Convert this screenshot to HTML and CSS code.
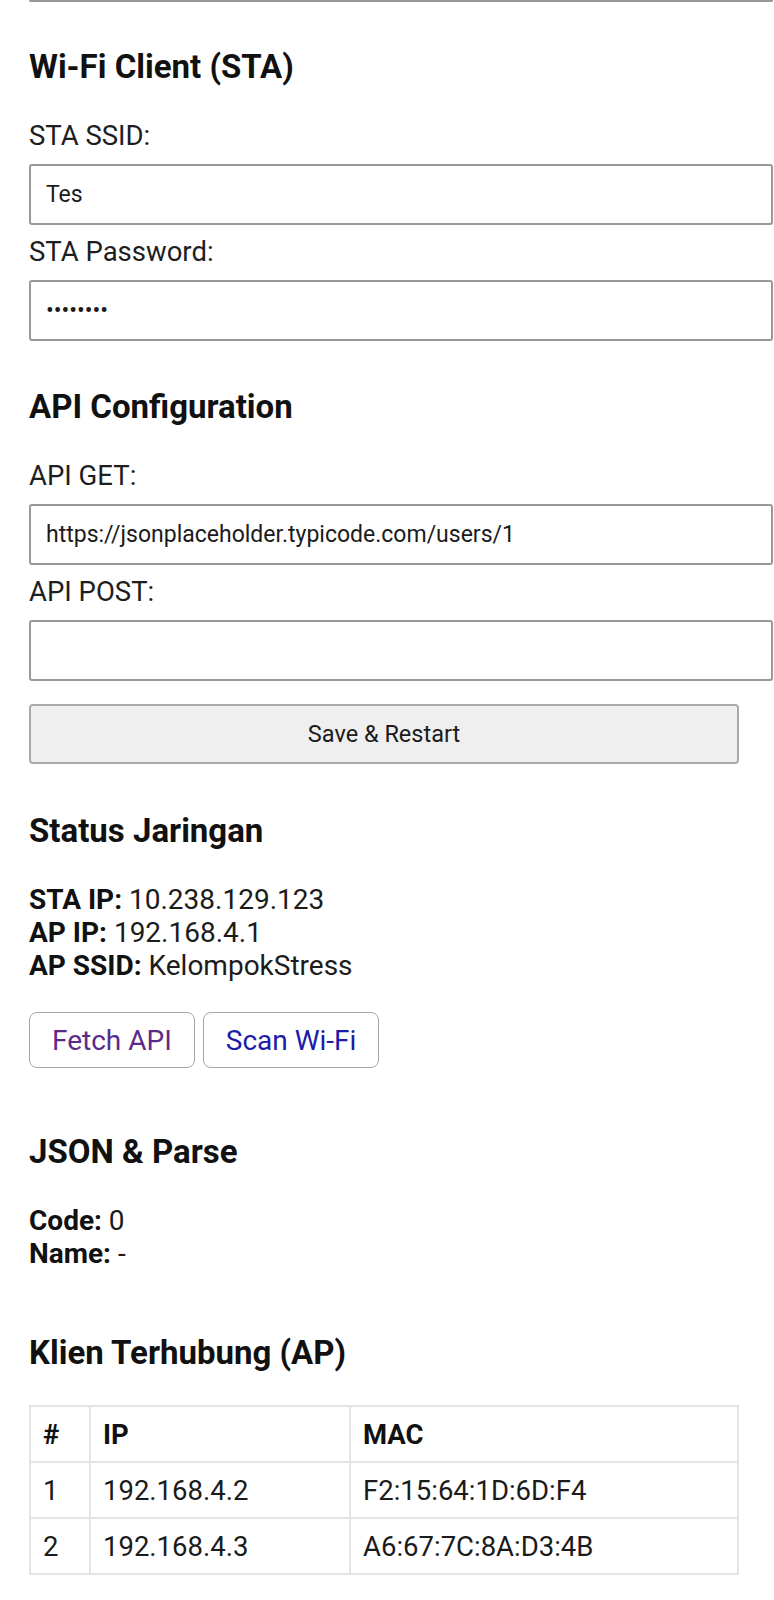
FILE: index.html
```html
<!DOCTYPE html>
<html lang="id">
<head>
<meta charset="utf-8">
<title>Konfigurasi</title>
<link rel="stylesheet" href="styles.css">
</head>
<body>
<div class="page">
  <div class="prev-field"></div>

  <section class="sec sec-sta">
    <h2 class="title">Wi-Fi Client (STA)</h2>
    <label class="lbl" for="ssid">STA SSID:</label>
    <input class="field" id="ssid" type="text" value="Tes">
    <label class="lbl" for="pass">STA Password:</label>
    <input class="field" id="pass" type="password" value="12345678">
  </section>

  <section class="sec sec-api">
    <h2 class="title">API Configuration</h2>
    <label class="lbl" for="get">API GET:</label>
    <input class="field" id="get" type="text" value="https://jsonplaceholder.typicode.com/users/1">
    <label class="lbl" for="post">API POST:</label>
    <input class="field" id="post" type="text" value="">
    <button class="save" type="button">Save &amp; Restart</button>
  </section>

  <section class="sec sec-status">
    <h2 class="title">Status Jaringan</h2>
    <p class="info"><b>STA IP:</b> 10.238.129.123<br><b>AP IP:</b> 192.168.4.1<br><b>AP SSID:</b> KelompokStress</p>
    <div class="actions">
      <a class="btn btn-visited" href="#fetch">Fetch API</a>
      <a class="btn btn-link" href="#scan">Scan Wi-Fi</a>
    </div>
  </section>

  <section class="sec sec-json">
    <h2 class="title">JSON &amp; Parse</h2>
    <p class="info"><b>Code:</b> 0<br><b>Name:</b> -</p>
  </section>

  <section class="sec sec-clients">
    <h2 class="title">Klien Terhubung (AP)</h2>
    <table class="clients">
      <thead>
        <tr><th class="c-no">#</th><th class="c-ip">IP</th><th class="c-mac">MAC</th></tr>
      </thead>
      <tbody>
        <tr><td>1</td><td>192.168.4.2</td><td>F2:15:64:1D:6D:F4</td></tr>
        <tr><td>2</td><td>192.168.4.3</td><td>A6:67:7C:8A:D3:4B</td></tr>
      </tbody>
    </table>
  </section>
</div>
</body>
</html>
```
FILE: styles.css
```css
html, body {
  margin: 0;
  padding: 0;
  background: #ffffff;
}

body {
  font-family: Roboto, "Liberation Sans", sans-serif;
  color: #1b1b1b;
}

.page {
  width: 710px;
  padding-left: 29px;
}

.prev-field {
  width: 740px;
  height: 0;
  border: 2px solid #999;
  border-top: none;
  border-radius: 0 0 3px 3px;
}

.sec {
  display: flex;
  flex-direction: column;
  align-items: flex-start;
}

.title {
  margin: 0;
  font-size: 33px;
  line-height: 36px;
  font-weight: 700;
  color: #111;
}

.sec-sta { padding-top: 47px; }
.sec-api { padding-top: 36px; }
.sec-status { padding-top: 49px; }
.sec-json { padding-top: 66px; }
.sec-clients { padding-top: 65px; }

.sec-sta .title { margin-bottom: 36px; }
.sec-api .title { margin-bottom: 36px; }

.lbl {
  display: block;
  font-size: 27.5px;
  line-height: 30px;
  margin-bottom: 13px;
  color: #1e1e1e;
}

.field {
  box-sizing: border-box;
  width: 744px;
  height: 61px;
  margin: 0 0 12px;
  padding: 0 15px;
  border: 2px solid #999;
  border-radius: 3px;
  background: #fff;
  font-family: Roboto, "Liberation Sans", sans-serif;
  font-size: 23px;
  color: #1b1b1b;
  outline: none;
}

.save {
  box-sizing: border-box;
  width: 710px;
  height: 60px;
  margin-top: 11px;
  border: 2px solid #aaa;
  border-radius: 4px;
  background: #efefef;
  font-family: Roboto, "Liberation Sans", sans-serif;
  font-size: 23.5px;
  color: #1b1b1b;
}

.info {
  margin: 0;
  font-size: 28px;
  line-height: 33px;
  color: #1b1b1b;
}

.info b {
  font-weight: 700;
  color: #111;
}

.sec-status .title { margin-bottom: 34px; }
.sec-json .title { margin-bottom: 34px; }
.sec-clients .title { margin-bottom: 34px; }

.actions {
  display: flex;
  gap: 8px;
  margin-top: 30px;
}

.btn {
  box-sizing: border-box;
  height: 56px;
  display: flex;
  align-items: center;
  padding: 0 22px;
  border: 1px solid #a6a6a6;
  border-radius: 8px;
  font-size: 28px;
  text-decoration: none;
  background: #fff;
}

.btn-visited { color: #5b2b8a; }
.btn-link { color: #1c1ca8; }

.clients {
  width: 710px;
  border-collapse: collapse;
  font-size: 27.5px;
  color: #1b1b1b;
}

.clients th,
.clients td {
  border: 2px solid #e4e4e4;
  height: 56px;
  padding: 0 12px;
  text-align: left;
  box-sizing: border-box;
}

.clients th { font-weight: 700; color: #111; }
.c-no { width: 60px; }
.c-ip { width: 260px; }
```
